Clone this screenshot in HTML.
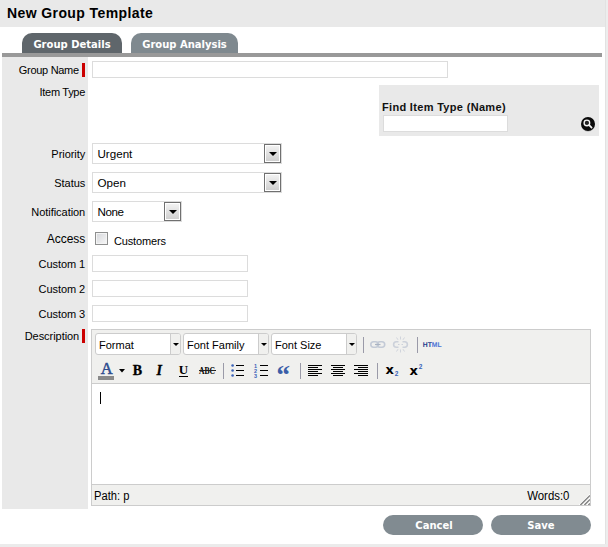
<!DOCTYPE html>
<html><head><meta charset="utf-8">
<style>
html,body{margin:0;padding:0;background:#fff;}
body{width:608px;height:547px;position:relative;overflow:hidden;font-family:"Liberation Sans",Arial,sans-serif;font-size:11px;color:#000;}
.abs{position:absolute;}
#frameR{left:605px;top:0;width:3px;height:547px;background:#ededed;border-left:1px solid #e2e2e2;box-sizing:border-box;}
#frameB{left:0;top:544px;width:608px;height:3px;background:#ebebeb;}
#hdr{left:0;top:0;width:605px;height:27px;background:#e9e9e9;}
#title{left:7px;top:4px;font-weight:bold;font-size:14px;letter-spacing:0.4px;line-height:18px;color:#000;white-space:nowrap;}
.tab{top:33px;height:20px;border-radius:10px 10px 0 0;color:#fff;font-family:"DejaVu Sans",Verdana,sans-serif;font-weight:bold;font-size:10px;line-height:23px;text-align:center;white-space:nowrap;}
#tab1{left:22px;width:100px;background:#5f666b;}
#tab2{left:131px;width:107px;background:#7f898f;}
#tabline{left:2px;top:53px;width:600px;height:4px;background:#999;}
#leftcol{left:2px;top:57px;width:86px;height:452px;background:#e9e9e9;}
.lbl{left:2px;width:83.2px;text-align:right;line-height:14px;height:14px;white-space:nowrap;color:#000;letter-spacing:-0.05px;}
.req{left:82px;width:3px;height:14px;background:#c00;}
.inp{background:#fff;border:1px solid #dcdcdc;box-sizing:border-box;}
.sel{font-size:11.6px;background:#fff;border:1px solid #dcdcdc;box-sizing:border-box;height:21px;line-height:20px;padding-left:4.5px;white-space:nowrap;}
.selbtn{position:absolute;right:0;top:0;width:17px;height:19px;box-sizing:border-box;border:1px solid #707070;background:linear-gradient(#f4f4f4,#cdcdcd);box-shadow:inset 0 0 0 1px #fff;}
.selbtn:after{content:"";position:absolute;left:3.5px;top:7px;border:4px solid transparent;border-top:4px solid #000;border-bottom:0;}
#find{left:379px;top:85px;width:220px;height:51px;background:#e9e9e9;}
#findlbl{left:382px;top:100px;font-weight:bold;line-height:14px;white-space:nowrap;color:#111;letter-spacing:0.32px;}
.btn{top:515px;height:20px;width:100px;border-radius:10px;background:#818b91;color:#fff;font-family:"DejaVu Sans",Verdana,sans-serif;font-weight:bold;font-size:10px;line-height:21px;text-align:center;}
#ed{left:91px;top:329px;width:500px;height:177px;border:1px solid #ccc;box-sizing:border-box;background:#fff;}
#edtb{left:0;top:0;width:498px;height:53px;background:#f0f0ee;border-bottom:1px solid #ccc;}
#edst{left:0;top:154px;width:498px;height:20px;background:#f0f0ee;border-top:1px solid #ccc;line-height:20px;}
.mcesel{top:3px;height:22px;width:86px;box-sizing:border-box;border:1px solid #ccc;border-radius:3px;background:#fff;line-height:22px;padding-left:3px;white-space:nowrap;color:#000;overflow:hidden;}
.mcesel i{position:absolute;right:0;top:0;width:9px;height:20px;border-left:1px solid #ccc;background:#f0f0ee;}
.mcesel i:after{content:"";position:absolute;left:1.5px;top:8.6px;border:3px solid transparent;border-top:3.6px solid #000;border-bottom:0;}
.sep{width:1px;height:16px;background:#8a8a9a;}
</style></head><body>
<div id="hdr" class="abs"></div>
<div id="frameR" class="abs"></div>
<div id="frameB" class="abs"></div>
<div id="title" class="abs">New Group Template</div>
<div id="tab1" class="abs tab">Group Details</div>
<div id="tab2" class="abs tab">Group Analysis</div>
<div id="tabline" class="abs"></div>
<div id="leftcol" class="abs"></div>

<div class="abs lbl" style="top:63px;width:76.8px;letter-spacing:-0.3px;">Group Name</div><div class="abs req" style="top:63px;"></div>
<div class="abs inp" style="left:92px;top:61px;width:356px;height:17px;"></div>
<div class="abs lbl" style="top:85px;width:83px;letter-spacing:-0.3px;">Item Type</div>

<div id="find" class="abs"></div>
<div id="findlbl" class="abs">Find Item Type (Name)</div>
<div class="abs inp" style="left:383px;top:115px;width:125px;height:17px;"></div>
<svg class="abs" style="left:580px;top:116px;" width="16" height="17" viewBox="0 0 16 17"><ellipse cx="8" cy="9" rx="6.5" ry="6.8" fill="#bbb"/><circle cx="8" cy="8" r="7" fill="#0a0a0a"/><circle cx="6.9" cy="6.9" r="2.8" fill="#222" stroke="#f4f4f4" stroke-width="1.35"/><path d="M9.2 9.2 L11.6 11.6" stroke="#f4f4f4" stroke-width="1.7" stroke-linecap="round"/></svg>

<div class="abs lbl" style="top:147px;">Priority</div>
<div class="abs sel" style="left:92px;top:143px;width:190px;">Urgent<span class="selbtn"></span></div>
<div class="abs lbl" style="top:176px;">Status</div>
<div class="abs sel" style="left:92px;top:172px;width:190px;">Open<span class="selbtn"></span></div>
<div class="abs lbl" style="top:205px;">Notification</div>
<div class="abs sel" style="left:92px;top:201px;width:90px;letter-spacing:-0.4px;">None<span class="selbtn"></span></div>
<div class="abs lbl" style="top:232px;font-size:12px;">Access</div>
<div class="abs" style="left:95px;top:232px;width:13px;height:13px;box-sizing:border-box;border:1px solid #8e8f8f;background:linear-gradient(135deg,#d4d6da,#f8f8f8);box-shadow:inset 0 0 0 1px #f4f4f4;"></div>
<div class="abs" style="left:114px;top:234px;line-height:14px;letter-spacing:-0.15px;">Customers</div>
<div class="abs lbl" style="top:257px;">Custom 1</div>
<div class="abs inp" style="left:92px;top:255px;width:156px;height:17px;"></div>
<div class="abs lbl" style="top:282px;">Custom 2</div>
<div class="abs inp" style="left:92px;top:280px;width:156px;height:17px;"></div>
<div class="abs lbl" style="top:307px;">Custom 3</div>
<div class="abs inp" style="left:92px;top:305px;width:156px;height:17px;"></div>
<div class="abs lbl" style="top:329px;width:77.2px;">Description</div><div class="abs req" style="top:329px;"></div>

<div id="ed" class="abs">
 <div id="edtb" class="abs"></div>
 <div class="abs mcesel" style="left:3px;">Format<i></i></div>
 <div class="abs mcesel" style="left:91px;">Font Family<i></i></div>
 <div class="abs mcesel" style="left:179px;">Font Size<i></i></div>
 <div id="edst" class="abs"><span style="position:absolute;left:2.4px;top:0.5px;font-size:12px;transform:scaleX(.93);transform-origin:0 50%;">Path: p</span><span style="position:absolute;right:21px;top:0.5px;font-size:12px;transform:scaleX(.95);transform-origin:100% 50%;">Words:0</span></div>
 <div class="abs" style="left:8px;top:62px;width:1px;height:12px;background:#000;"></div>
</div>

<svg class="abs" style="left:92px;top:330px;" width="498" height="53" viewBox="92 330 498 53" shape-rendering="crispEdges">
<g fill="#9a9aa8"><rect x="363" y="337" width="1" height="16"/><rect x="417" y="337" width="1" height="16"/><rect x="223" y="363" width="1" height="16"/><rect x="300" y="363" width="1" height="16"/><rect x="377" y="363" width="1" height="16"/></g>
<g shape-rendering="auto" fill="none" stroke="#c3cad6" stroke-width="1.6"><rect x="370.8" y="341.8" width="7.5" height="5.4" rx="2.7"/><rect x="377.2" y="341.8" width="7.5" height="5.4" rx="2.7"/><path d="M375 344.5h5.5" stroke="#aab3c2" stroke-width="1.2"/></g>
<g shape-rendering="auto" fill="none" stroke="#ccd1da" stroke-width="1.6"><path d="M398.5 341.8h-2.2a2.7 2.7 0 0 0 0 5.4h2.2"/><path d="M402.5 341.8h2.2a2.7 2.7 0 0 1 0 5.4h-2.2"/><path d="M398 344.5h1.5M401.5 344.5h1.5" stroke-width="1.2"/><path d="M400.5 336.5v3M400.5 349.5v3M396.5 337.5l1.5 2.3M404.5 337.5l-1.5 2.3M396.5 351.5l1.5-2.3M404.5 351.5l-1.5-2.3" stroke-width="1" stroke="#d0d4dc"/></g>
<text x="422.8" y="346.9" font-family="Liberation Sans,Arial,sans-serif" font-weight="bold" font-size="6.8px" fill="#1c3a8c" text-rendering="geometricPrecision">HT<tspan fill="#4c73d6">ML</tspan></text>
<text x="100.8" y="374.2" font-family="Liberation Serif,serif" font-size="16.5px" fill="#2d4c8e" stroke="#2d4c8e" stroke-width=".5">A</text>
<rect x="98" y="376" width="16" height="4" fill="#8a8a8a"/>
<path d="M119 369h6l-3 3.5z" fill="#000" shape-rendering="auto"/>
<text x="132.8" y="375" font-family="Liberation Serif,serif" font-weight="bold" font-size="14px" stroke="#000" stroke-width=".3" fill="#000">B</text>
<text x="156.5" y="375" font-family="Liberation Serif,serif" font-weight="bold" font-style="italic" font-size="14px" stroke="#000" stroke-width=".3" fill="#000">I</text>
<text x="178.8" y="374.3" font-family="Liberation Serif,serif" font-weight="bold" font-size="13px" fill="#000">U</text>
<rect x="179" y="376" width="9" height="1" fill="#000"/>
<text x="199" y="373.8" font-family="Liberation Serif,serif" font-weight="bold" font-size="9.5px" textLength="16" lengthAdjust="spacingAndGlyphs" fill="#000">ABC</text>
<rect x="198.5" y="370" width="17" height="1" fill="#222"/>
<g fill="#3b62b8" shape-rendering="auto"><circle cx="232.6" cy="365.5" r="1.3"/><circle cx="232.6" cy="370.5" r="1.3"/><circle cx="232.6" cy="375.5" r="1.3"/></g>
<g fill="#000"><rect x="236" y="365" width="8" height="1"/><rect x="236" y="370" width="8" height="1"/><rect x="236" y="375" width="8" height="1"/><rect x="260" y="365" width="8" height="1"/><rect x="260" y="370" width="8" height="1"/><rect x="260" y="375" width="8" height="1"/></g>
<g font-family="Liberation Sans,Arial,sans-serif" font-weight="bold" font-size="5.5px" fill="#3b62b8"><text x="254" y="367.5">1</text><text x="254" y="372.5">2</text><text x="254" y="377.5">3</text></g>
<text x="276.6" y="384" font-family="Liberation Serif,serif" font-weight="bold" font-size="27px" fill="#3b5ea8">“</text>
<g fill="#000">
<rect x="308" y="365" width="14" height="1"/><rect x="308" y="367" width="10" height="1"/><rect x="308" y="369" width="14" height="1"/><rect x="308" y="371" width="10" height="1"/><rect x="308" y="373" width="14" height="1"/><rect x="308" y="375" width="10" height="1"/>
<rect x="331" y="365" width="14" height="1"/><rect x="333" y="367" width="10" height="1"/><rect x="331" y="369" width="14" height="1"/><rect x="333" y="371" width="10" height="1"/><rect x="331" y="373" width="14" height="1"/><rect x="333" y="375" width="10" height="1"/>
<rect x="354" y="365" width="14" height="1"/><rect x="358" y="367" width="10" height="1"/><rect x="354" y="369" width="14" height="1"/><rect x="358" y="371" width="10" height="1"/><rect x="354" y="373" width="14" height="1"/><rect x="358" y="375" width="10" height="1"/>
</g>
<g font-family="DejaVu Sans,Verdana,sans-serif" font-weight="bold" fill="#000"><text x="385.6" y="374.2" font-size="13px">x</text><text x="409.6" y="375.2" font-size="13px">x</text></g>
<g font-family="Liberation Sans,Arial,sans-serif" font-weight="bold" font-size="6.5px" fill="#3b62b8"><text x="394.8" y="376.2">2</text><text x="418.8" y="369.4">2</text></g>
</svg>
<svg class="abs" style="left:579px;top:494px;" width="11" height="11" viewBox="0 0 11 11"><g stroke="#fff" stroke-width="1.2"><path d="M0.3 11 L11 0.3M4.3 11 L11 4.3M8.3 11 L11 8.3"/></g><g stroke="#7c7c7c" stroke-width="1.3"><path d="M1.4 11 L11 1.4M5.4 11 L11 5.4M9.4 11 L11 9.4"/></g></svg>
<div class="abs btn" style="left:383px;text-indent:2px;">Cancel</div>
<div class="abs btn" style="left:491px;">Save</div>
</body></html>
